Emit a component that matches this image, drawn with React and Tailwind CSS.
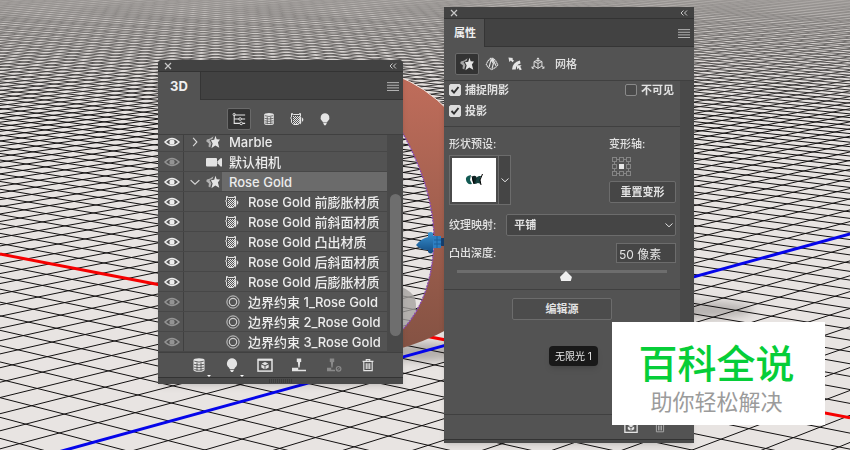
import { useState } from 'react';

// Ground grid: two families of parallel lines, each running to its own vanishing point
const HORIZON = -189;
const LEFT_VP = -2298;
const RIGHT_VP = 2385;

const range = (from, to) => Array.from({ length: to - from + 1 }, (_, i) => from + i);

const fallingLine = (inv) => `M0 ${HORIZON - LEFT_VP / inv}L850 ${HORIZON + (850 - LEFT_VP) / inv}`;
const risingLine = (inv) => `M0 ${HORIZON + RIGHT_VP / inv}L850 ${HORIZON + (RIGHT_VP - 850) / inv}`;

const gridPath = [
    ...range(-14, 92).map((k) => fallingLine(5.187 + k * 0.127)),
    ...range(-13, 85).map((k) => risingLine(3.63 + k * 0.109)),
].join('');

const layers = [
    { icon: 'mesh', label: 'Marble', type: 'group', visible: true },
    { icon: 'camera', label: '默认相机', type: 'group', visible: false },
    { icon: 'mesh', label: 'Rose Gold', type: 'group', visible: true, open: true, selected: true },
    { icon: 'material', label: 'Rose Gold 前膨胀材质', visible: true },
    { icon: 'material', label: 'Rose Gold 前斜面材质', visible: true },
    { icon: 'material', label: 'Rose Gold 凸出材质', visible: true },
    { icon: 'material', label: 'Rose Gold 后斜面材质', visible: true },
    { icon: 'material', label: 'Rose Gold 后膨胀材质', visible: true },
    { icon: 'constraint', label: '边界约束 1_Rose Gold', visible: false },
    { icon: 'constraint', label: '边界约束 2_Rose Gold', visible: false },
    { icon: 'constraint', label: '边界约束 3_Rose Gold', visible: false },
];

function Icon({ name, className = 'size-4' }) {
    return (
        <svg viewBox="0 0 16 16" className={`shrink-0 ${className}`} fill="none" stroke="currentColor" aria-hidden="true">
            {icons[name]}
        </svg>
    );
}

const dots = (xs, ys) => ys.flatMap((y, j) => xs.map((x, i) => ((i + j) % 2 ? null : <rect key={`${x}-${y}`} x={x} y={y} width="1" height="1" />)));

const icons = {
    eye: (
        <>
            <path d="M1 8Q8 .8 15 8Q8 15.2 1 8Z" strokeWidth="1.5" />
            <circle cx="8" cy="8" r="2.6" fill="currentColor" stroke="none" />
        </>
    ),
    mesh: (
        <>
            <path d="M10.8 .8L12.2 4.8L16 5.2L13.6 8.6L15.2 14.6L10.6 12L6.2 15L7.6 9.6L5.6 6L9.4 5.4Z" fill="currentColor" stroke="none" />
            <path d="M8.6 1.4L7.4 4.6L4 5.8L6.2 9.4L4.8 14.2L2.8 13L3.4 9.8L.2 7.2L1 5.2L4.8 4Z" fill="currentColor" stroke="none" opacity=".65" />
        </>
    ),
    camera: (
        <g fill="currentColor" stroke="none">
            <rect x="0" y="4" width="11" height="8.6" rx="1" />
            <path d="M11.5 7.3L14.5 4.2H16V12.4H14.5L11.5 9.3Z" />
        </g>
    ),
    material: (
        <>
            <path d="M4.5 3.5H3.5V2.5H2.5V6L1.5 7L2.5 8V11.5L4.5 13.5H9.5M4.5 3.5H10.5V2.5H11.5V5.5" />
            <g fill="currentColor" stroke="none">
                {dots([4, 5, 6, 7, 8, 9, 10], [5, 6, 7, 8, 9, 10, 11, 12])}
                <path d="M10 5H11.5V13H10Z" opacity=".5" />
                <path d="M11 6H12.2V12L11 13.4Z" />
                <path d="M13 6.5Q15.8 8.7 13 11Z" />
            </g>
        </>
    ),
    constraint: (
        <>
            <circle cx="8" cy="8" r="7" strokeWidth="1.1" opacity=".85" />
            <circle cx="8" cy="8" r="4.2" strokeWidth="1.3" opacity=".85" />
        </>
    ),
    scene: (
        <>
            <path d="M2.5 3.5H15M2.5 3.5V13H9M2.5 8H8M11 8H15M12 13H15" strokeWidth="1.2" />
            <circle cx="2.5" cy="2.8" r="1.3" strokeWidth="1" />
            <circle cx="9.3" cy="8" r="1.5" strokeWidth="1.1" />
            <circle cx="10.5" cy="13" r="1.5" strokeWidth="1.1" />
        </>
    ),
    barrel: (
        <>
            <path d="M2.5 3Q2.5 1.2 8 1.2T13.5 3V13Q13.5 14.8 8 14.8T2.5 13Z" fill="currentColor" stroke="none" />
            <path d="M3.3 4.2Q8 6 12.7 4.2M3 7.3Q8 8.7 13 7.3M3 10Q8 11.4 13 10M3.3 12.6Q8 13.9 12.7 12.6M6 5.5V14M10 5.5V14" stroke="#535353" strokeWidth=".9" />
        </>
    ),
    bulb: (
        <g fill="currentColor" stroke="none">
            <path d="M8 1.3A5.2 5.2 0 0 0 4.6 10.3Q5.6 11.2 5.7 12H10.3Q10.4 11.2 11.4 10.3A5.2 5.2 0 0 0 8 1.3Z" />
            <path d="M5.9 12.7H10.1L8.9 15H7.1Z" />
        </g>
    ),
    render: (
        <>
            <rect x="1" y="2.5" width="14" height="11.6" strokeWidth="1.5" />
            <path d="M1 2.8H15" strokeWidth="2" />
            <path d="M8 5L11.3 6.6L8 8.2L4.7 6.6ZM4.3 7.5L7.5 9V12.2L4.3 10.6ZM11.7 7.5L8.5 9V12.2L11.7 10.6Z" fill="currentColor" stroke="none" />
        </>
    ),
    plane: (
        <g fill="currentColor" stroke="none">
            <path d="M5.8 1.5H10.2V5H9.2L8.6 10.5H7.4L6.8 5H5.8Z" />
            <path d="M1 10.8H7.2V12.8H15V14.3H1Z" />
        </g>
    ),
    planeAdd: (
        <>
            <path d="M3.8 1.5H8.2V5H7.2L6.6 10.5H5.4L4.8 5H3.8ZM1 10.8H5.2V12.8H9V14.3H1Z" fill="currentColor" stroke="none" />
            <circle cx="12.6" cy="11.8" r="2.3" strokeWidth="1.2" />
            <path d="M11 13.4L14.2 10.2" />
        </>
    ),
    trash: (
        <path d="M1.8 3.8H14.2M6 3.5V1.8H10V3.5M3.2 4V14.4H12.8V4M6 6V12.6M8 6V12.6M10 6V12.6" strokeWidth="1.3" />
    ),
    cap: (
        <>
            <path d="M6.5 1.5L3 5L1.4 8.8L4 12.2L7.6 14.4L12 12L14.6 9L12.2 4.4L9 1.5Z" strokeWidth="1.2" strokeDasharray="2 .5" />
            <path d="M4.8 11.4L7 3L9.6 7.4L8 13.4M9 2.5L12.5 10" strokeWidth="1.3" />
            <path d="M6.6 1.6L9.6 1.6L10 7Z" fill="currentColor" stroke="none" />
        </>
    ),
    deform: (
        <g fill="currentColor" stroke="none">
            <path d="M.5 .6L5.8 1L4.8 2.4L6.8 4.3L5.2 5.9L3.2 4L1.6 5.6Z" />
            <path d="M4.6 14.4Q4.9 6.2 13.6 4L14.4 7.4Q9 8.8 8.8 14.4Z" />
            <path d="M10.2 9.3H15.6L14 11L15.8 14.4L13.4 15.2L12 12.6L10.4 14.4Z" />
        </g>
    ),
    coords: (
        <>
            <path d="M8 1V6M6.5 2.6L8 1L9.5 2.6M3.5 5.2L8 7.4L12.5 5.2V10.3L8 13L3.5 10.3V5.2L8 3.6L12.5 5.2M8 7.4V13" strokeWidth="1.1" />
            <path d="M4 10L1.2 12.8M1.2 10.8V12.8H3.5M12 10L14.8 12.8M14.8 10.8V12.8H12.5" strokeWidth="1.1" />
        </>
    ),
    right: <path d="M5 1.5L11 8L5 14.5" strokeWidth="1.8" />,
    down: <path d="M1 5L8 11.5L15 5" strokeWidth="2" />,
    close: <path d="M2 2L14 14M14 2L2 14" strokeWidth="2.4" />,
    collapse: <path d="M7 3L2 8L7 13M14 3L9 8L14 13" strokeWidth="2" />,
    menu: <path d="M0 3.5H16M0 7H16M0 10.5H16M0 14H16" strokeWidth="1.2" />,
};

function Scene() {
    return (
        <svg viewBox="0 0 850 450" preserveAspectRatio="xMidYMid slice" className="absolute inset-0 size-full" aria-hidden="true">
            <defs>
                <linearGradient id="haze" x1="0" y1="0" x2="0" y2="1">
                    <stop offset="0" stopColor="#b2aeab" stopOpacity=".85" />
                    <stop offset=".3" stopColor="#bbb7b4" stopOpacity=".6" />
                    <stop offset=".7" stopColor="#d0ccca" stopOpacity=".2" />
                    <stop offset="1" stopColor="#e8e4e2" stopOpacity="0" />
                </linearGradient>
                <linearGradient id="copper" x1="0" y1="0" x2="0" y2="1">
                    <stop offset="0" stopColor="#c06d5b" />
                    <stop offset=".5" stopColor="#a2604f" />
                    <stop offset="1" stopColor="#845243" />
                </linearGradient>
                <linearGradient id="steel" x1="0" y1="0" x2="0" y2="1">
                    <stop offset="0" stopColor="#3a94d4" />
                    <stop offset="1" stopColor="#124a80" />
                </linearGradient>
                <filter id="soft" x="-30%" y="-50%" width="160%" height="200%">
                    <feGaussianBlur stdDeviation="4" />
                </filter>
            </defs>
            <rect width="850" height="450" fill="#e8e4e2" />
            <g fill="#8d8986" filter="url(#soft)">
                <ellipse cx="705" cy="310" rx="48" ry="8" opacity=".55" />
                <ellipse cx="422" cy="352" rx="40" ry="9" opacity=".6" />
            </g>
            <path d={gridPath} stroke="#121010" strokeWidth="1" fill="none" />
            <rect width="850" height="120" fill="url(#haze)" />
            <path d="M395 285Q408 288 414 296Q420 310 408 332H395Z" fill="#a5a2a0" opacity=".8" />
            <path d={fallingLine(5.187)} stroke="#f60000" strokeWidth="3" />
            <path d={risingLine(3.63)} stroke="#0505ea" strokeWidth="3" />
            <path d="M395 75Q425 86 450 112V328Q425 342 395 350V337Q434 303 434 235Q432 180 395 120Z" fill="url(#copper)" />
            <path d="M395 75Q425 86 450 112" stroke="#f3e9e4" strokeWidth="1" fill="none" />
            <path d="M395 337Q434 303 434 235Q432 180 395 120" stroke="#8a4bb0" strokeWidth="1.4" strokeDasharray="2 1" fill="none" />
            <rect x="433" y="236" width="8" height="12" fill="#2d7fc2" />
            <path d="M434 240H441M434 244H441M437 236V248" stroke="#1c5f98" strokeWidth="1" />
            <rect x="441" y="238" width="3" height="8" fill="#17406f" />
            <path d="M416 245Q422 238 428 237L428 233Q431 231 433 233V252Q431 255 428 252V250Q420 250 416 245Z" fill="url(#steel)" />
        </svg>
    );
}

function PanelHeader({ title, tabClass }) {
    return (
        <header className="bg-[#424242]">
            <div className="flex h-3 items-center justify-between border-b border-[#333] px-1.5 text-[#c8c8c8]">
                <button type="button" aria-label="关闭"><Icon name="close" className="size-2" /></button>
                <button type="button" aria-label="折叠"><Icon name="collapse" className="size-2" /></button>
            </div>
            <div className="flex h-7 justify-between">
                <h2 className={`flex items-center justify-center bg-[#535353] font-bold text-[#f0f0f0] ${tabClass}`}>{title}</h2>
                <div className="flex flex-1 items-center justify-end border-b border-l border-[#353535] pr-1">
                    <button type="button" aria-label="面板菜单" className="text-[#c0c0c0]"><Icon name="menu" className="size-3" /></button>
                </div>
            </div>
        </header>
    );
}

function ToolButton({ icon, label, active }) {
    return (
        <button
            type="button"
            aria-label={label}
            className={`flex h-[22px] items-center justify-center rounded-xs border text-[#e4e4e4] ${active ? 'w-6 border-[#6a6a6a] bg-[#333]' : 'w-5 border-transparent'}`}
        >
            <Icon name={icon} className={icon === 'material' ? 'size-4' : 'size-3.5'} />
        </button>
    );
}

function LayerRow({ layer }) {
    const isGroup = layer.type === 'group';
    return (
        <li className="flex h-5 shrink-0 items-stretch border-b border-[#474747]">
            <button
                type="button"
                aria-label="可见性"
                className={`flex w-[26px] shrink-0 items-center justify-center border-r border-[#404040] pl-0.5 ${layer.visible ? 'text-[#ececec]' : 'text-[#939393]'}`}
            >
                <Icon name="eye" />
            </button>
            {isGroup ? (
                <>
                    <span className="flex w-[22px] shrink-0 items-center justify-center text-[#d8d8d8]">
                        {layer.icon === 'mesh' && <Icon name={layer.open ? 'down' : 'right'} className="size-2.5" />}
                    </span>
                    <span className="flex w-4 shrink-0 items-center text-[#e4e4e4]"><Icon name={layer.icon} className={layer.icon === 'camera' ? 'size-4' : 'size-3.5'} /></span>
                </>
            ) : (
                <span className="flex w-[56px] shrink-0 items-center justify-end text-[#e4e4e4]"><Icon name={layer.icon} className={layer.icon === 'material' ? 'size-4' : 'size-3.5'} /></span>
            )}
            <span className={`flex flex-1 items-center whitespace-nowrap ${isGroup ? 'pl-[7px]' : 'pl-2'} ${layer.selected ? 'bg-[#6b6b6b]' : ''}`}>
                {layer.label}
            </span>
        </li>
    );
}

function LayersPanel() {
    return (
        <section className="absolute left-[158px] top-[60px] w-[245px] overflow-hidden rounded-t-sm bg-[#535353] text-[13px] font-medium leading-5 text-[#ececec] shadow-md">
            <PanelHeader title="3D" tabClass="w-[42px]" />
            <nav className="flex h-[35px] items-center justify-center gap-2 border-b border-[#404040] pt-1">
                <ToolButton icon="scene" label="场景" active />
                <ToolButton icon="barrel" label="网格" />
                <ToolButton icon="material" label="材质" />
                <ToolButton icon="bulb" label="光源" />
            </nav>
            <div className="flex h-[217px]">
                {/* list is scrolled to its end, so the first row is cut at the top */}
                <ul className="flex min-w-0 flex-1 flex-col justify-end overflow-hidden">
                    {layers.map((layer) => <LayerRow key={layer.label} layer={layer} />)}
                </ul>
                <div className="flex w-4 justify-center bg-[#494949] pb-4 pt-[59px]">
                    <div className="w-[11px] rounded-full bg-[#6e6e6e]" />
                </div>
            </div>
            <footer className="flex h-[25px] items-center justify-between border-t border-[#404040] pl-[33px] pr-7 text-[#e4e4e4]">
                <button type="button" aria-label="添加对象" className="flex items-end">
                    <Icon name="barrel" className="size-4" />
                    <span className="-mb-1 -mr-1.5 size-0 border-x-2 border-t-2 border-x-transparent border-t-white" />
                </button>
                <button type="button" aria-label="添加光源" className="flex items-end">
                    <Icon name="bulb" className="size-4" />
                    <span className="-mb-1 -mr-1.5 size-0 border-x-2 border-t-2 border-x-transparent border-t-white" />
                </button>
                <button type="button" aria-label="渲染"><Icon name="render" /></button>
                <button type="button" aria-label="移到地面"><Icon name="plane" /></button>
                <button type="button" aria-label="添加到地面" className="text-[#8a8a8a]"><Icon name="planeAdd" /></button>
                <button type="button" aria-label="删除"><Icon name="trash" className="size-3.5" /></button>
            </footer>
            <div className="flex h-[7px] items-center justify-center border-t border-[#333] bg-[#4a4a4a]">
                <div className="h-1 w-6 bg-[repeating-linear-gradient(90deg,#3c3c3c_0_1px,transparent_1px_2px)]" />
            </div>
        </section>
    );
}

function CheckBox({ label, checked, onChange }) {
    return (
        <label className="flex items-center gap-1 font-bold">
            <span className="relative flex size-3">
                <input
                    type="checkbox"
                    checked={checked}
                    onChange={onChange}
                    className="size-3 appearance-none rounded-xs border border-[#8a8a8a] bg-[#4a4a4a] checked:border-[#dcdcdc] checked:bg-[#dcdcdc]"
                />
                {checked && (
                    <svg viewBox="0 0 12 12" className="pointer-events-none absolute inset-0 size-3" fill="none" stroke="#2f2f2f" strokeWidth="1.9" aria-hidden="true">
                        <path d="M2.5 6L5 8.6L9.5 3" />
                    </svg>
                )}
            </span>
            {label}
        </label>
    );
}

function AxisGrid() {
    return (
        <svg viewBox="0 0 20 20" className="size-5" fill="none" stroke="#858585" aria-hidden="true">
            <path d="M2.5 2.5H16.5V16.5H2.5Z" />
            {[2.5, 9.5, 16.5].flatMap((y) => [2.5, 9.5, 16.5].map((x) => (
                <rect key={`${x}-${y}`} x={x - 2} y={y - 2} width="4" height="4" fill="#535353" />
            )))}
            <rect x="7" y="7" width="5" height="5" fill="#e6e6e6" stroke="none" />
        </svg>
    );
}

function PropertiesPanel() {
    const [capture, setCapture] = useState(true);
    const [cast, setCast] = useState(true);
    const [hidden, setHidden] = useState(false);
    const [depth, setDepth] = useState(52);

    return (
        <section className="absolute left-[444px] top-[7px] w-[250px] overflow-hidden bg-[#535353] text-[11px] leading-4 text-[#e2e2e2] shadow-md">
            <PanelHeader title="属性" tabClass="w-10 pl-0.5" />
            <nav className="flex h-[34px] items-center gap-[3px] border-b border-[#404040] pl-[11px]">
                <ToolButton icon="mesh" label="网格" active />
                <ToolButton icon="cap" label="盖子" />
                <ToolButton icon="deform" label="变形" />
                <ToolButton icon="coords" label="坐标" />
                <span className="pl-1 pt-px font-medium">网格</span>
            </nav>

            <div className="flex">
                <div className="min-w-0 flex-1">
                    <div className="space-y-[5px] border-b border-[#404040] pb-[7px] pl-[5px] pr-1.5 pt-px">
                        <div className="flex justify-between">
                            <CheckBox label="捕捉阴影" checked={capture} onChange={(e) => setCapture(e.target.checked)} />
                            <CheckBox label="不可见" checked={hidden} onChange={(e) => setHidden(e.target.checked)} />
                        </div>
                        <CheckBox label="投影" checked={cast} onChange={(e) => setCast(e.target.checked)} />
                    </div>

                    <div className="border-b border-[#404040] pb-2 pl-[5px] pr-1 pt-[9px]">
                        <div className="flex justify-between">
                            <div>
                                <p className="font-medium">形状预设:</p>
                                <button type="button" aria-label="形状预设" className="mt-[3px] flex h-[50px] border border-[#6c6c6c]">
                                    <span className="flex size-12 items-center justify-center border-2 border-[#4a4a4a] bg-white">
                                        <svg viewBox="0 0 20 14" className="h-3.5 w-5" aria-hidden="true">
                                            <path d="M7 2Q1 3 2 7Q3 12 8 11L6 7Z" fill="#125a53" />
                                            <path d="M9 3Q12 2 13 5V10L10 11Q7 7 9 3Z" fill="#0d2424" />
                                            <path d="M13 4L15 3L17 3L16 7L17 11L14 10L11 11Z" fill="#16413e" />
                                            <path d="M18.5 1L16 7L17 12M8 3L10 11" stroke="#000" fill="none" />
                                        </svg>
                                    </span>
                                    <span className="flex h-12 w-3 items-center justify-center border-l border-[#6c6c6c] bg-[#454545]"><Icon name="down" className="size-2" /></span>
                                </button>
                            </div>
                            <div className="w-[67px]">
                                <p className="font-medium">变形轴:</p>
                                <div className="mt-[5px] pl-[3px]"><AxisGrid /></div>
                                <button type="button" className="mt-1 h-[22px] w-full rounded-xs border border-[#6c6c6c] bg-[#464646] font-bold">重置变形</button>
                            </div>
                        </div>
                        <div className="mt-[9px] flex items-center gap-2.5">
                            <label htmlFor="mapping" className="font-medium">纹理映射:</label>
                            <div className="relative flex-1">
                                <select id="mapping" className="h-[22px] w-full appearance-none rounded-xs border border-[#6c6c6c] bg-[#454545] pl-[7px] font-bold">
                                    <option>平铺</option>
                                </select>
                                <span className="pointer-events-none absolute inset-y-0 right-[3px] flex items-center"><Icon name="down" className="size-2" /></span>
                            </div>
                        </div>
                        <div className="mt-[7px] flex items-center justify-between">
                            <label htmlFor="depth" className="font-medium">凸出深度:</label>
                            <input id="depth" type="text" defaultValue="50 像素" className="h-5 w-[60px] border border-[#6c6c6c] bg-[#454545] pl-0.5 text-xs" />
                        </div>
                        <input
                            type="range"
                            aria-label="凸出深度"
                            value={depth}
                            onChange={(e) => setDepth(e.target.value)}
                            className="mx-2 mt-1 block h-3.5 w-[210px] appearance-none bg-[linear-gradient(#6d6d6d,#6d6d6d)] bg-[length:100%_3px] bg-[position:0_3px] bg-no-repeat [&::-webkit-slider-thumb]:mt-1 [&::-webkit-slider-thumb]:h-2.5 [&::-webkit-slider-thumb]:w-3 [&::-webkit-slider-thumb]:appearance-none [&::-webkit-slider-thumb]:bg-[#f0f0f0] [&::-webkit-slider-thumb]:[clip-path:polygon(50%_0,100%_60%,90%_100%,10%_100%,0_60%)]"
                        />
                    </div>

                    <div className="flex h-[124px] justify-center pt-2">
                        <button type="button" className="h-[22px] w-[100px] rounded-xs border border-[#6c6c6c] bg-[#4c4c4c] font-bold">编辑源</button>
                    </div>
                </div>
                <div className="w-3.5 bg-[#494949]" />
            </div>

            <footer className="flex h-[25px] items-center justify-end gap-4 border-t border-[#404040] pr-7 text-[#e4e4e4]">
                <button type="button" aria-label="渲染"><Icon name="render" className="size-3.5" /></button>
                <button type="button" aria-label="删除" className="text-[#a8a8a8]"><Icon name="trash" className="size-3" /></button>
            </footer>
            <div className="h-1 border-t border-[#333] bg-[#4a4a4a]" />
        </section>
    );
}

export default function App() {
    return (
        <main className="relative h-screen w-full overflow-hidden font-['Inter','Noto_Sans_CJK_SC',sans-serif]">
            <Scene />
            <LayersPanel />
            <PropertiesPanel />
            <div role="tooltip" className="absolute left-[549px] top-[346px] rounded-sm bg-[#191919] px-1.5 py-0.5 text-[10px] leading-4 text-[#e8e8e8] shadow-md">
                无限光 1
            </div>
            <aside className="absolute left-[612px] top-[322px] flex h-[103px] w-[213px] flex-col items-center justify-center bg-white pr-1 pt-4">
                <p className="text-[39px] font-medium leading-10 text-[#06ce38]">百科全说</p>
                <p className="text-[22px] leading-9 text-[#9b9b9b]">助你轻松解决</p>
            </aside>
        </main>
    );
}
